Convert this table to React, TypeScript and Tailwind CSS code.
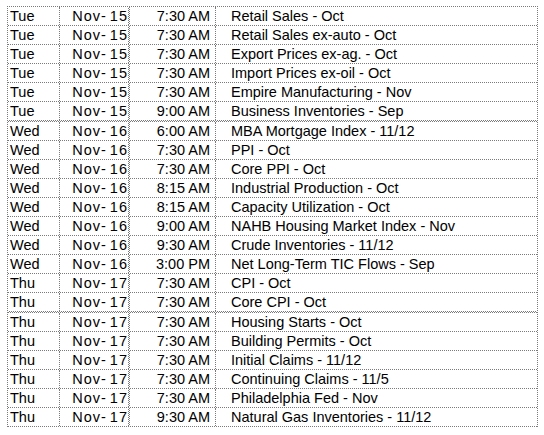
const rows: [string, string, string, string][] = [
  ['Tue', '15', '7:30 AM', 'Retail Sales - Oct'],
  ['Tue', '15', '7:30 AM', 'Retail Sales ex-auto - Oct'],
  ['Tue', '15', '7:30 AM', 'Export Prices ex-ag. - Oct'],
  ['Tue', '15', '7:30 AM', 'Import Prices ex-oil - Oct'],
  ['Tue', '15', '7:30 AM', 'Empire Manufacturing - Nov'],
  ['Tue', '15', '9:00 AM', 'Business Inventories - Sep'],
  ['Wed', '16', '6:00 AM', 'MBA Mortgage Index - 11/12'],
  ['Wed', '16', '7:30 AM', 'PPI - Oct'],
  ['Wed', '16', '7:30 AM', 'Core PPI - Oct'],
  ['Wed', '16', '8:15 AM', 'Industrial Production - Oct'],
  ['Wed', '16', '8:15 AM', 'Capacity Utilization - Oct'],
  ['Wed', '16', '9:00 AM', 'NAHB Housing Market Index - Nov'],
  ['Wed', '16', '9:30 AM', 'Crude Inventories - 11/12'],
  ['Wed', '16', '3:00 PM', 'Net Long-Term TIC Flows - Sep'],
  ['Thu', '17', '7:30 AM', 'CPI - Oct'],
  ['Thu', '17', '7:30 AM', 'Core CPI - Oct'],
  ['Thu', '17', '7:30 AM', 'Housing Starts - Oct'],
  ['Thu', '17', '7:30 AM', 'Building Permits - Oct'],
  ['Thu', '17', '7:30 AM', 'Initial Claims - 11/12'],
  ['Thu', '17', '7:30 AM', 'Continuing Claims - 11/5'],
  ['Thu', '17', '7:30 AM', 'Philadelphia Fed - Nov'],
  ['Thu', '17', '9:30 AM', 'Natural Gas Inventories - 11/12'],
];

// rows after which the grid line looks doubled in the screenshot
const thick = new Set([5, 15]);

const checker =
  'bg-[repeating-conic-gradient(#7a7a7a_0_25%,transparent_0_50%)] bg-[length:2px_2px]';

export default function App() {
  return (
    <div className="w-[544px] h-[435px] bg-white pt-[6px] pl-[7px] font-['Liberation_Sans',Arial,sans-serif] text-[14.5px] text-black">
      <div className="w-[531px] border-t border-l border-r border-dotted border-[#7a7a7a]">
        {rows.map(([day, dd, time, event], i) => (
          <div key={i}>
            <div className="flex h-[18px] leading-[18px] whitespace-nowrap">
              <div className="w-[52px] pl-[2px] border-r border-dotted border-[#7a7a7a]">{day}</div>
              <div className="w-[68px] text-right tracking-[1px]">
                Nov-<span className="ml-[3px]">{dd}</span>
              </div>
              <div className={`w-[2px] ${checker}`} />
              <div className="w-[86px] pr-[5px] text-right border-r border-dotted border-[#7a7a7a]">{time}</div>
              <div className="flex-1 pl-[15px]">{event}</div>
            </div>
            {thick.has(i) ? (
              <div className={`h-[2px] ${checker}`} />
            ) : (
              <div className="border-b border-dotted border-[#7a7a7a]" />
            )}
          </div>
        ))}
      </div>
    </div>
  );
}
